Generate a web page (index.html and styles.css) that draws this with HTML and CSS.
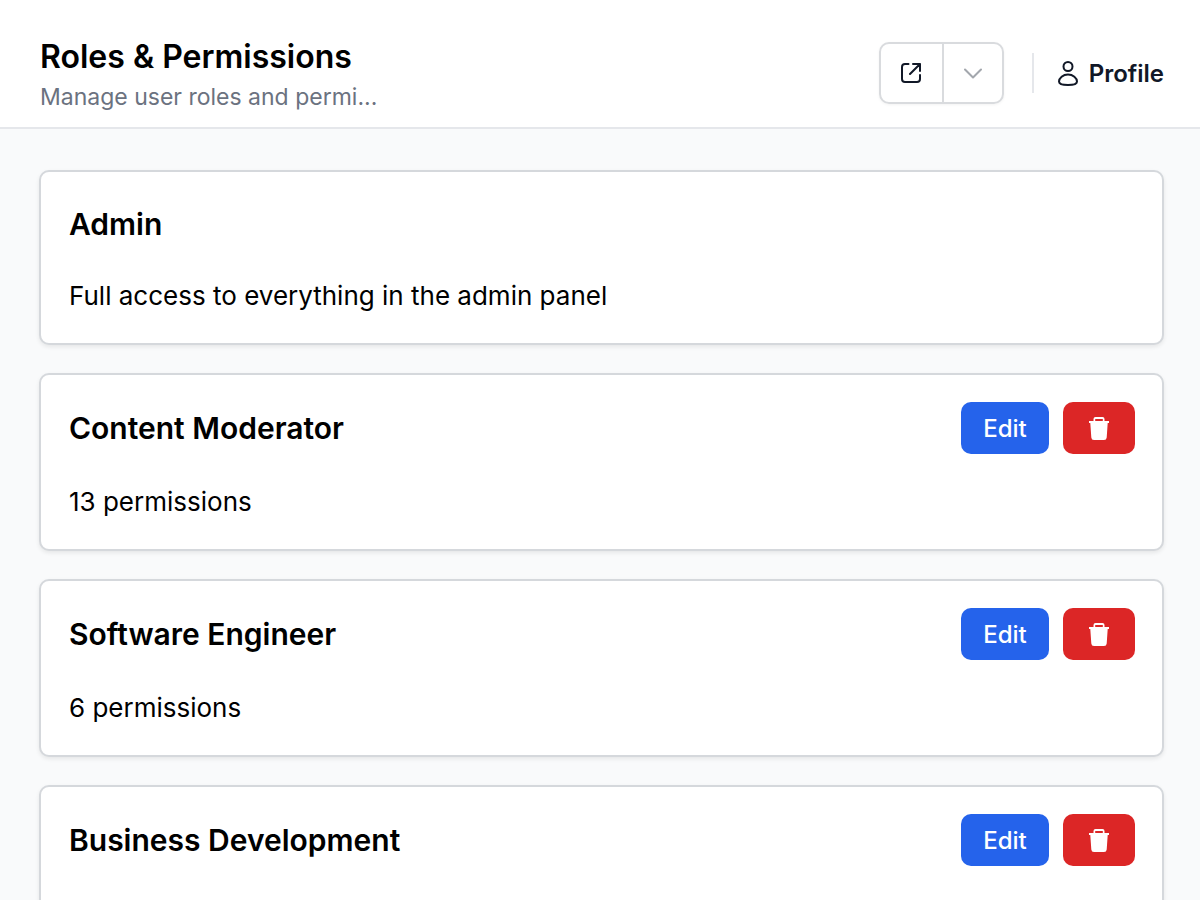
FILE: index.html
```html
<!DOCTYPE html>
<html lang="en">

<head>
    <meta charset="UTF-8">
    <meta name="viewport" content="width=device-width, initial-scale=1.0">
    <title>Roles &amp; Permissions</title>
    <link rel="stylesheet" href="styles.css">
</head>

<body>
    <svg class="sprite" aria-hidden="true">
        <symbol id="trash" viewBox="0 0 20 23">
            <path d="M4.5 4V2Q4.5 0 6.5 0H13.5Q15.5 0 15.5 2V4H20V6H18.7L17.7 20.5Q17.5 23 15 23H5Q2.5 23 2.3 20.5L1.3 6H0V4ZM6.2 4H13.8V2H6.2Z" fill="currentColor" fill-rule="evenodd" />
        </symbol>
    </svg>

    <header class="header">
        <div class="heading">
            <h1 class="title">Roles &amp; Permissions</h1>
            <p class="subtitle">Manage user roles and permi...</p>
        </div>
        <div class="actions">
            <div class="split">
                <button type="button" class="split-btn split-open" aria-label="Open site">
                    <svg class="icon-open" viewBox="0 0 20 20">
                        <path d="M7.5 1H4Q1 1 1 4V16Q1 19 4 19H16Q19 19 19 16V12M12 1H19V8M19 1L9 11" />
                    </svg>
                </button>
                <button type="button" class="split-btn split-more" aria-label="More options">
                    <svg class="icon-chevron" viewBox="0 0 18 11">
                        <path d="M1 1.5L9 9.5L17 1.5" />
                    </svg>
                </button>
            </div>
            <a href="#" class="profile">
                <svg class="icon-user" viewBox="0 0 20 25">
                    <circle cx="10" cy="5.5" r="4.5" />
                    <path d="M10 13.5C5 13.5 1 17 1 20.5C1 23 5 24 10 24C15 24 19 23 19 20.5C19 17 15 13.5 10 13.5Z" />
                </svg>
                <span>Profile</span>
            </a>
        </div>
    </header>

    <main class="roles">
        <section class="card">
            <div class="card-head">
                <h2 class="card-title">Admin</h2>
            </div>
            <p class="card-text">Full access to everything in the admin panel</p>
        </section>
        <section class="card">
            <div class="card-head">
                <h2 class="card-title">Content Moderator</h2>
                <div class="card-actions">
                    <button type="button" class="btn btn-edit">Edit</button>
                    <button type="button" class="btn btn-delete" aria-label="Delete"><svg class="icon-trash"><use href="#trash" /></svg></button>
                </div>
            </div>
            <p class="card-text">13 permissions</p>
        </section>
        <section class="card">
            <div class="card-head">
                <h2 class="card-title">Software Engineer</h2>
                <div class="card-actions">
                    <button type="button" class="btn btn-edit">Edit</button>
                    <button type="button" class="btn btn-delete" aria-label="Delete"><svg class="icon-trash"><use href="#trash" /></svg></button>
                </div>
            </div>
            <p class="card-text">6 permissions</p>
        </section>
        <section class="card">
            <div class="card-head">
                <h2 class="card-title">Business Development</h2>
                <div class="card-actions">
                    <button type="button" class="btn btn-edit">Edit</button>
                    <button type="button" class="btn btn-delete" aria-label="Delete"><svg class="icon-trash"><use href="#trash" /></svg></button>
                </div>
            </div>
        </section>
    </main>
</body>

</html>
```

FILE: styles.css
```css
* {
    margin: 0;
    padding: 0;
    box-sizing: border-box;
}

body {
    min-height: 100vh;
    background-color: #f9fafb;
    color: #000;
    font-family: Inter, "Liberation Sans", sans-serif;
}

button {
    font: inherit;
    cursor: pointer;
}

svg {
    display: block;
}

.sprite {
    display: none;
}

.header {
    display: flex;
    justify-content: space-between;
    align-items: center;
    gap: 40px;
    padding: 37px 36px 10px 40px;
    background-color: #fff;
    border-bottom: 2px solid #e5e7eb;
}

.title {
    font-size: 32px;
    line-height: 40px;
    font-weight: 600;
    white-space: nowrap;
}

.subtitle {
    color: #6b7280;
    font-size: 23px;
    line-height: 40px;
    white-space: nowrap;
}

.actions {
    display: flex;
    align-items: center;
    gap: 28px;
    padding-bottom: 8px;
}

.split {
    display: flex;
    height: 62px;
    border: 2px solid #d9dbde;
    border-radius: 10px;
    box-shadow: 0 1px 3px rgba(0, 0, 0, .05);
}

.split-btn {
    display: flex;
    justify-content: center;
    align-items: center;
    background: none;
    border: 0;
}

.split-open {
    width: 63px;
    color: #111827;
    border-right: 2px solid #d9dbde;
}

.split-more {
    width: 58px;
    color: #a3a7ad;
}

.split-btn svg,
.icon-user {
    fill: none;
    stroke: currentColor;
    stroke-width: 2;
    stroke-linecap: round;
    stroke-linejoin: round;
}

.icon-open {
    width: 20px;
    height: 20px;
}

.icon-chevron {
    width: 18px;
    height: 11px;
}

.profile {
    display: flex;
    align-items: center;
    gap: 11px;
    height: 40px;
    padding-left: 24px;
    border-left: 2px solid #e5e7eb;
    color: #111827;
    font-size: 24px;
    font-weight: 600;
    text-decoration: none;
}

.icon-user {
    width: 20px;
    height: 25px;
}

.roles {
    display: flex;
    flex-direction: column;
    gap: 28px;
    padding: 41px 36px 41px 39px;
}

.card {
    padding: 27px 27px 27px 28px;
    background-color: #fff;
    border: 2px solid #d5d8dc;
    border-radius: 10px;
    box-shadow: 0 2px 4px rgba(0, 0, 0, .08);
}

.card-head {
    display: flex;
    justify-content: space-between;
    align-items: center;
    min-height: 49px;
    margin-bottom: 28px;
}

.card-title {
    font-size: 30px;
    line-height: 40px;
    font-weight: 600;
}

.card-text {
    font-size: 26px;
    line-height: 40px;
}

.card-actions {
    display: flex;
    gap: 14px;
}

.btn {
    display: flex;
    justify-content: center;
    align-items: center;
    height: 52px;
    border: 0;
    border-radius: 10px;
    color: #fff;
    font-size: 24px;
    font-weight: 500;
}

.btn-edit {
    width: 88px;
    background-color: #2563eb;
}

.btn-delete {
    width: 72px;
    background-color: #dc2626;
}

.icon-trash {
    width: 20px;
    height: 23px;
}
```
